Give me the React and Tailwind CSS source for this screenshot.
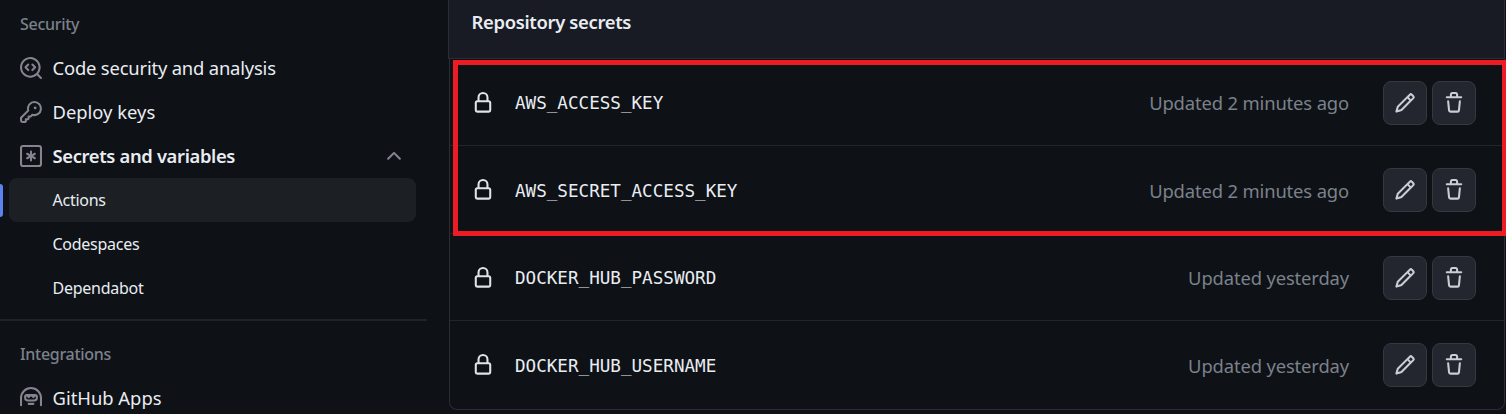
const ICONS = {
  codescan: ["M8.47 4.97a.75.75 0 0 0 0 1.06L9.94 7.5 8.47 8.97a.75.75 0 1 0 1.06 1.06l2-2a.75.75 0 0 0 0-1.06l-2-2a.75.75 0 0 0-1.06 0ZM6.53 6.03a.75.75 0 0 0-1.06-1.06l-2 2a.75.75 0 0 0 0 1.06l2 2a.75.75 0 1 0 1.06-1.06L5.06 7.5l1.47-1.47Z", "M12.246 13.307a7.501 7.501 0 1 1 1.06-1.06l2.474 2.473a.749.749 0 0 1-.326 1.275.749.749 0 0 1-.734-.215ZM1.5 7.5a6.002 6.002 0 0 0 3.608 5.504 6.002 6.002 0 0 0 6.486-1.117.748.748 0 0 1 .292-.293A6 6 0 1 0 1.5 7.5Z"],
  key: ["M10.5 0a5.499 5.499 0 1 1-1.288 10.848l-.932.932a.749.749 0 0 1-.53.22H7v.75a.749.749 0 0 1-.22.53l-.5.5a.749.749 0 0 1-.53.22H5v.75a.749.749 0 0 1-.22.53l-.5.5a.749.749 0 0 1-.53.22h-2A1.75 1.75 0 0 1 0 14.25v-2c0-.199.079-.389.22-.53l4.932-4.932A5.5 5.5 0 0 1 10.5 0Zm-4 5.5c-.001.431.069.86.205 1.269a.75.75 0 0 1-.181.768L1.5 12.56v1.69c0 .138.112.25.25.25h1.69l.06-.06v-1.19a.75.75 0 0 1 .75-.75h1.19l.06-.06v-1.19a.75.75 0 0 1 .75-.75h1.19l1.023-1.025a.75.75 0 0 1 .768-.18A4 4 0 1 0 6.5 5.5ZM11 6a1 1 0 1 1 0-2 1 1 0 0 1 0 2Z"],
  asterisk: ["M0 2.25A2.25 2.25 0 0 1 2.25 0h11.5A2.25 2.25 0 0 1 16 2.25v11.5A2.25 2.25 0 0 1 13.75 16H2.25A2.25 2.25 0 0 1 0 13.75ZM2.25 1.5a.75.75 0 0 0-.75.75v11.5c0 .414.336.75.75.75h11.5a.75.75 0 0 0 .75-.75V2.25a.75.75 0 0 0-.75-.75Z", "M8 4a.75.75 0 0 1 .75.75V6.7l1.69-.975a.75.75 0 0 1 .75 1.3L9.5 8l1.69.976a.75.75 0 0 1-.75 1.298L8.75 9.3v1.951a.75.75 0 0 1-1.5 0V9.299l-1.69.976a.75.75 0 0 1-.75-1.3L6.5 8l-1.69-.975a.75.75 0 0 1 .75-1.3l1.69.976V4.75A.75.75 0 0 1 8 4Z"],
  lock: ["M4 4a4 4 0 0 1 8 0v2h.25c.966 0 1.75.784 1.75 1.75v5.5A1.75 1.75 0 0 1 12.25 15h-8.5A1.75 1.75 0 0 1 2 13.25v-5.5C2 6.784 2.784 6 3.75 6H4Zm8.25 3.5h-8.5a.25.25 0 0 0-.25.25v5.5c0 .138.112.25.25.25h8.5a.25.25 0 0 0 .25-.25v-5.5a.25.25 0 0 0-.25-.25ZM10.5 6V4a2.5 2.5 0 1 0-5 0v2Z"],
  pencil: ["M11.013 1.427a1.75 1.75 0 0 1 2.474 0l1.086 1.086a1.75 1.75 0 0 1 0 2.474l-8.61 8.61c-.21.21-.47.364-.756.445l-3.251.93a.75.75 0 0 1-.927-.928l.929-3.25c.081-.286.235-.547.445-.758l8.61-8.61Zm.176 4.823L9.75 4.81l-6.286 6.287a.253.253 0 0 0-.064.108l-.558 1.953 1.953-.558a.253.253 0 0 0 .108-.064Zm1.238-3.763a.25.25 0 0 0-.354 0L10.811 3.75l1.439 1.44 1.263-1.263a.25.25 0 0 0 0-.354Z"],
  trash: ["M11 1.75V3h2.25a.75.75 0 0 1 0 1.5H2.75a.75.75 0 0 1 0-1.5H5V1.75C5 .784 5.784 0 6.75 0h2.5C10.216 0 11 .784 11 1.75ZM4.496 6.675l.66 6.6a.25.25 0 0 0 .249.225h5.19a.25.25 0 0 0 .249-.225l.66-6.6a.75.75 0 0 1 1.492.149l-.66 6.6A1.748 1.748 0 0 1 10.595 15h-5.19a1.75 1.75 0 0 1-1.741-1.575l-.66-6.6a.75.75 0 1 1 1.492-.15ZM6.5 1.75V3h3V1.75a.25.25 0 0 0-.25-.25h-2.5a.25.25 0 0 0-.25.25Z"],
  chevron: ["M3.22 10.53a.749.749 0 0 1 0-1.06l4.25-4.25a.749.749 0 0 1 1.06 0l4.25 4.25a.749.749 0 1 1-1.06 1.06L8 6.811 4.28 10.53a.749.749 0 0 1-1.06 0Z"],
  hubot: ["M0 8a8 8 0 1 1 16 0v5.25a.75.75 0 0 1-1.5 0V8a6.5 6.5 0 1 0-13 0v5.25a.75.75 0 0 1-1.5 0V8Zm5.5 4.25a.75.75 0 0 1 .75-.75h3.5a.75.75 0 0 1 0 1.5h-3.5a.75.75 0 0 1-.75-.75Z", "M3 6.75C3 5.784 3.784 5 4.75 5h6.5c.966 0 1.75.784 1.75 1.75v1A2.75 2.75 0 0 1 10.25 10.5h-4.5A2.75 2.75 0 0 1 3 7.75Zm1.5 0v1c0 .69.56 1.25 1.25 1.25h4.5c.69 0 1.25-.56 1.25-1.25v-1L10.2 7.9a.75.75 0 0 1-1 0L8 6.8 6.8 7.9a.75.75 0 0 1-1 0Z"],
};

function Icon({ name, className = "" }) {
  return (
    <svg viewBox="0 0 16 16" className={`size-[22px] shrink-0 overflow-visible ${className}`} fill="currentColor" fillRule="evenodd" aria-hidden="true">
      {ICONS[name].map((d) => <path key={d} d={d} />)}
    </svg>
  );
}

function NavItem({ icon, label, className = "" }) {
  return (
    <a className="flex h-11 items-center gap-[10.5px] pl-5">
      <Icon name={icon} className="text-[#848590]" />
      <span className={`whitespace-nowrap text-[18.4px] ${className}`}>{label}</span>
    </a>
  );
}

function SubItem({ label }) {
  return (
    <a className="flex h-11 items-center pl-[52.5px]">
      <span className="whitespace-nowrap text-[16px] tracking-[-0.26px]">{label}</span>
    </a>
  );
}

function IconButton({ name, label }) {
  return (
    <button aria-label={label} className="flex size-11 items-center justify-center rounded-lg border border-[#36383e] bg-[#23262e] text-[#c9cdd6]">
      <Icon name={name} />
    </button>
  );
}

const SECRETS = [
  { name: "AWS_ACCESS_KEY", updated: "Updated 2 minutes ago", row: "h-[86px]", text: "" },
  { name: "AWS_SECRET_ACCESS_KEY", updated: "Updated 2 minutes ago", row: "h-[88px] border-t", text: "mt-[2px]" },
  { name: "DOCKER_HUB_PASSWORD", updated: "Updated yesterday", row: "h-[87px] border-t", text: "" },
  { name: "DOCKER_HUB_USERNAME", updated: "Updated yesterday", row: "h-[88px] border-t", text: "mt-[2px]" },
];

export default function App() {
  return (
    <div className="relative flex h-[414px] w-[1506px] overflow-hidden bg-[#0e1116] font-['Noto_Sans',sans-serif] text-[#e9edf2]">
      <nav className="w-[427px] shrink-0">
        <h2 className="flex h-[46px] items-center pl-5 pt-[2px] text-[16px] font-medium tracking-[-0.3px] text-[#7b828b]"><span>Security</span></h2>
        <NavItem icon="codescan" label="Code security and analysis" className="tracking-[-0.18px]" />
        <NavItem icon="key" label="Deploy keys" />
        <div className="flex items-center">
          <NavItem icon="asterisk" label="Secrets and variables" className="font-semibold tracking-[-0.35px]" />
          <Icon name="chevron" className="ml-auto mr-[22px] text-[#848590]" />
        </div>
        <div className="flex items-center">
          <div className="h-[33px] w-[3px] rounded-r-[3px] bg-[#5b83f0]" />
          <div className="ml-[6px] h-11 w-[407px] rounded-lg bg-[#1c1f24]">
            <div className="-ml-[9px]"><SubItem label="Actions" /></div>
          </div>
        </div>
        <SubItem label="Codespaces" />
        <SubItem label="Dependabot" />
        <div className="mt-[9px] h-[2px] bg-[#202328]" />
        <h2 className="flex h-[55px] items-center pl-5 pt-[10px] text-[16px] font-medium tracking-[-0.3px] text-[#7b828b]"><span>Integrations</span></h2>
        <NavItem icon="hubot" label="GitHub Apps" />
      </nav>
      <section className="ml-[21px] w-[1058px]">
        <header className="flex h-[59px] w-[1057px] items-start border-x border-b border-[#2a2d33] bg-[#181b23] pl-[22.5px] pt-[9px]">
          <h3 className="whitespace-nowrap text-[18.4px] font-semibold leading-[26px] tracking-[-0.32px]">Repository secrets</h3>
        </header>
        <ul className="ml-px h-[351px] w-[1056px] rounded-b-lg border-x border-b border-[#2a2d33]">
          {SECRETS.map((s) => (
            <li key={s.name} className={`border-[#22252a] pl-[22px] pr-[28px] pt-[22px] ${s.row}`}>
              <div className="flex h-11 items-center">
                <Icon name="lock" className="text-[#e0e3ea]" />
                <span className={`ml-[21px] whitespace-nowrap font-['DejaVu_Sans_Mono',monospace] text-[17.6px] leading-[26px] ${s.text}`}>{s.name}</span>
                <span className={`ml-auto mr-[34px] whitespace-nowrap text-[18.4px] leading-[26px] tracking-[-0.14px] text-[#7b828b] ${s.text}`}>{s.updated}</span>
                <div className="flex gap-[5px]">
                  <IconButton name="pencil" label="Edit secret" />
                  <IconButton name="trash" label="Delete secret" />
                </div>
              </div>
            </li>
          ))}
        </ul>
      </section>
      <div className="absolute left-[453px] top-[60px] h-[176px] w-[1054px] border-[5px] border-[#ed1c24]" />
    </div>
  );
}
